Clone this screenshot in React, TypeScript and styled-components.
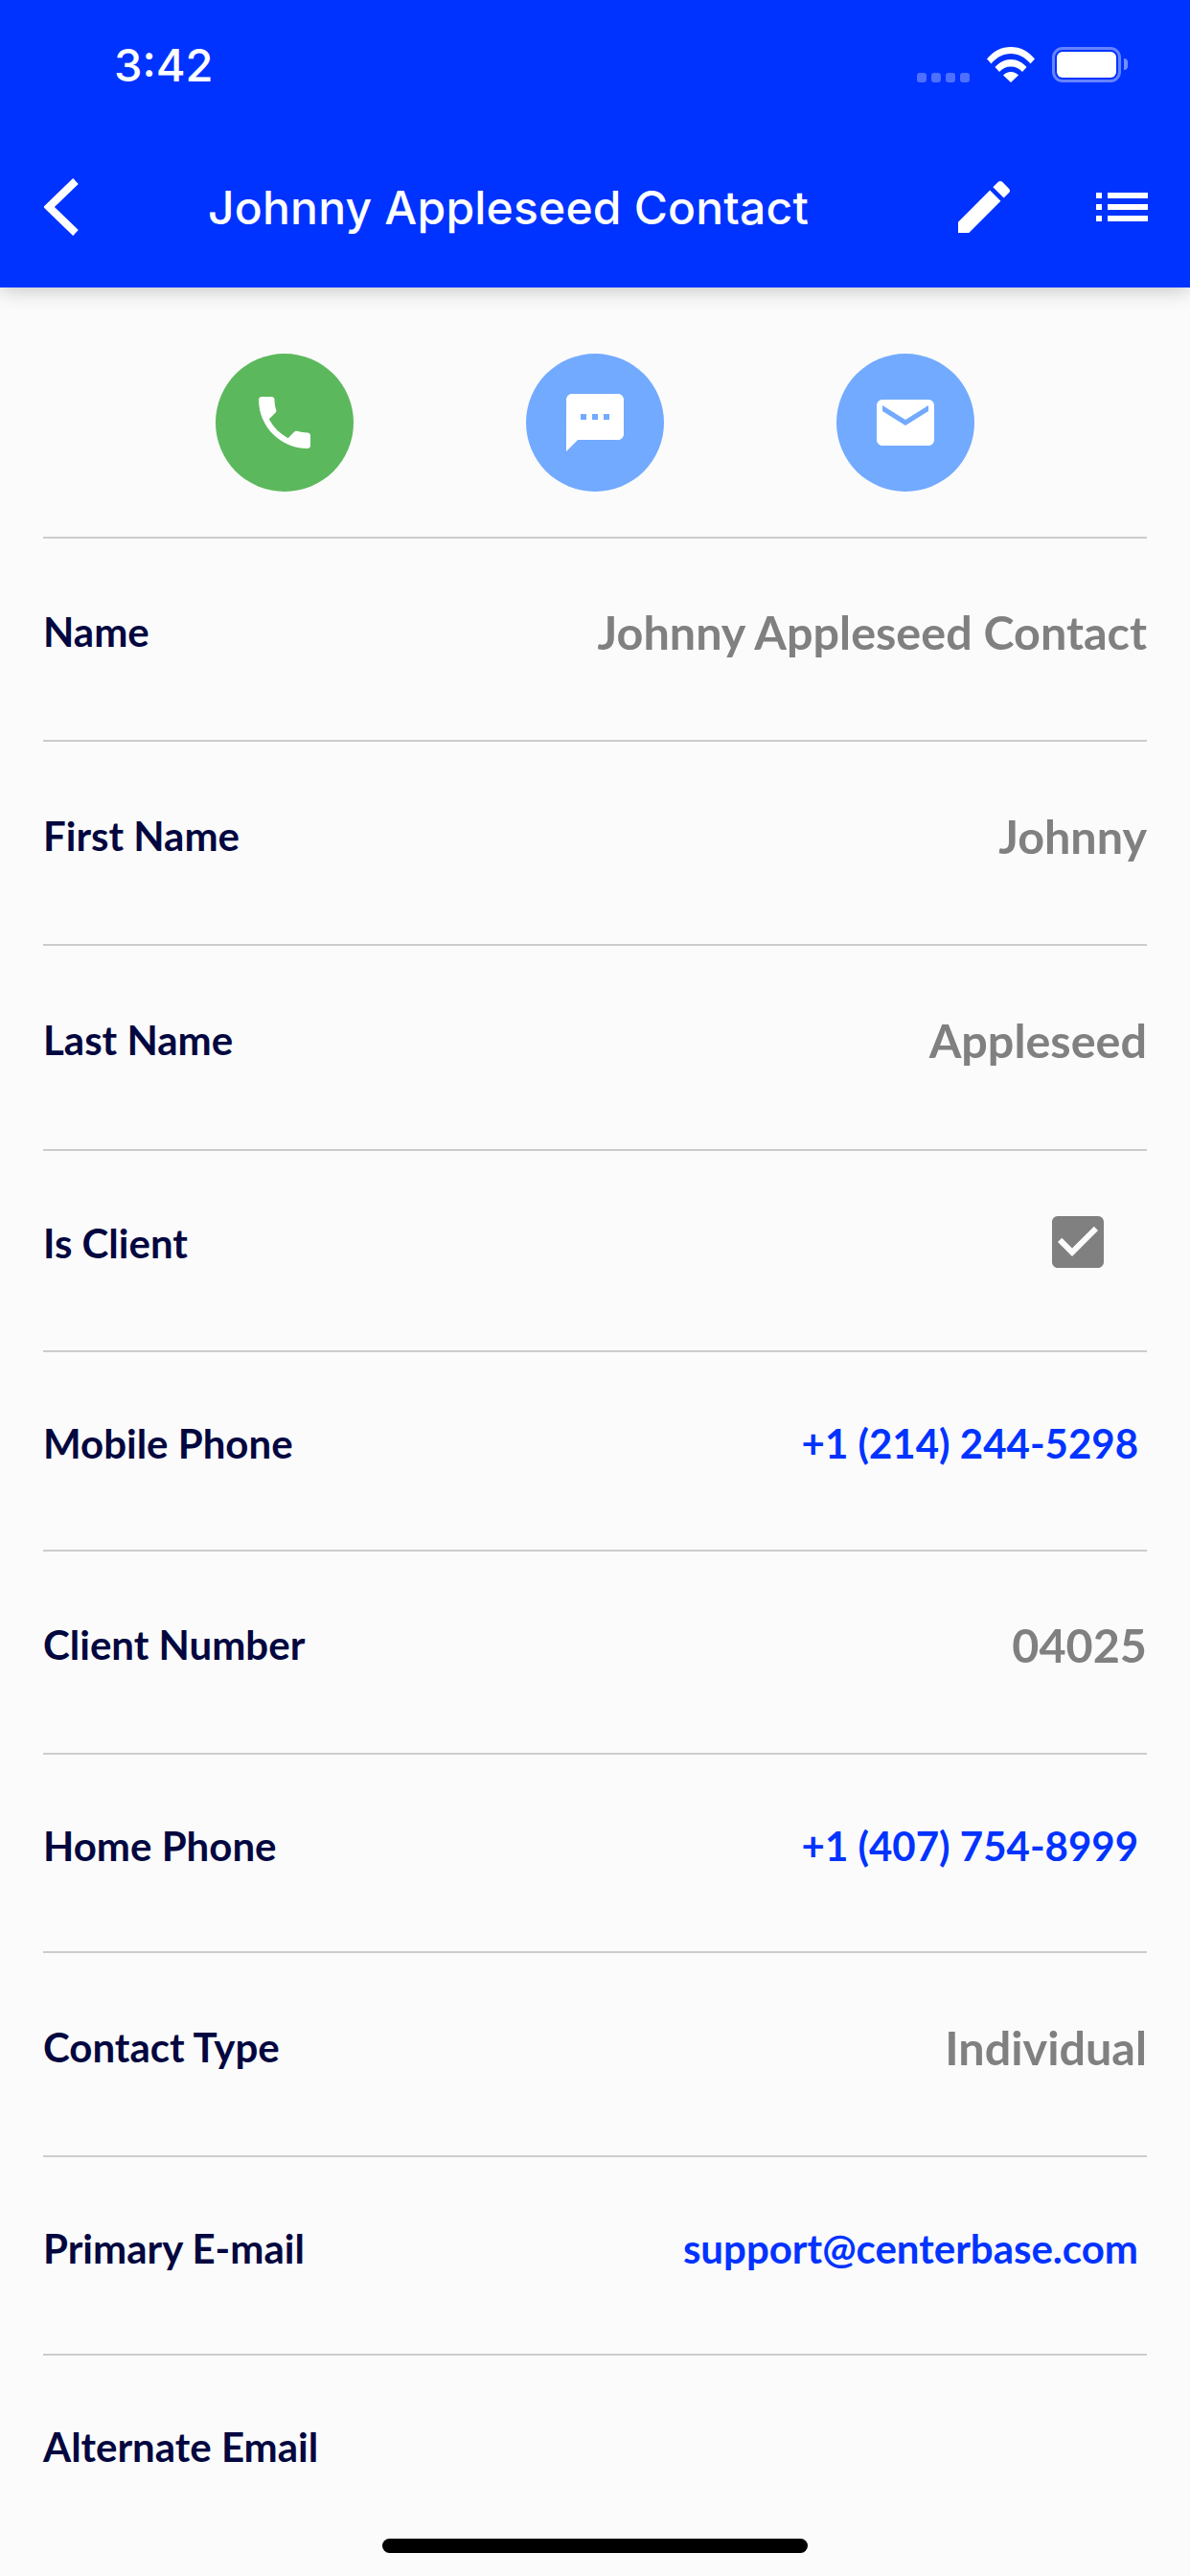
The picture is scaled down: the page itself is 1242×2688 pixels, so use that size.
import React from "react";
import styled, { createGlobalStyle } from "styled-components";

const GlobalStyle = createGlobalStyle`
  html, body {
    margin: 0;
    padding: 0;
    background: #fbfbfb;
  }
`;

interface RowData {
  label: string;
  value?: string;
  link?: boolean;
  checked?: boolean;
  height: number;
}

const rows: RowData[] = [
  { label: "Name", value: "Johnny Appleseed Contact", height: 212 },
  { label: "First Name", value: "Johnny", height: 213 },
  { label: "Last Name", value: "Appleseed", height: 214 },
  { label: "Is Client", checked: true, height: 210 },
  { label: "Mobile Phone", value: "+1 (214) 244-5298", link: true, height: 208 },
  { label: "Client Number", value: "04025", height: 212 },
  { label: "Home Phone", value: "+1 (407) 754-8999", link: true, height: 207 },
  { label: "Contact Type", value: "Individual", height: 213 },
  { label: "Primary E-mail", value: "support@centerbase.com", link: true, height: 207 },
  { label: "Alternate Email", height: 207 },
];

function App() {
  return (
    <Screen>
      <GlobalStyle />
      <Header>
        <StatusBar>
          <Clock>3:42</Clock>
          <StatusIcons>
            <SignalDots>
              <i />
              <i />
              <i />
              <i />
            </SignalDots>
            <svg width="50" height="37" viewBox="0 0 50 37">
              <path d="M0 12.500C6.500 4.500 15 0 25 0s18.500 4.500 25 12.500l-4.500 5C39.500 10.500 33 7 25 7S10.500 10.500 4.500 17.500z" fill="#fff" />
              <path d="M8.500 21C13 16 18.500 13 25 13s12 3 16.500 8l-4.500 5C34 22.500 30 20.500 25 20.500S16 22.500 13 26z" fill="#fff" />
              <path d="M17 29.500c2-2.200 5-3.500 8-3.500s6 1.300 8 3.500L25 37z" fill="#fff" />
            </svg>
            <Battery>
              <BatteryFill />
              <BatteryNub />
            </Battery>
          </StatusIcons>
        </StatusBar>
        <NavBar>
          <BackButton>
            <svg width="36" height="60" viewBox="0 0 36 60">
              <path d="M33 3L5 30l28 27" fill="none" stroke="#fff" strokeWidth="8" />
            </svg>
          </BackButton>
          <Title>Johnny Appleseed Contact</Title>
          <NavActions>
            <svg width="72" height="72" viewBox="0 0 24 24" fill="#fff">
              <path d="M3 17.250V21h3.750L17.810 9.940l-3.750-3.750L3 17.250zM20.710 7.040c.39-.39.39-1.020 0-1.410l-2.340-2.340c-.39-.39-1.020-.39-1.410 0l-1.830 1.830 3.750 3.750 1.830-1.830z" />
            </svg>
            <svg width="72" height="72" viewBox="0 0 24 24" fill="#fff">
              <path d="M3 13h2v-2H3v2zm0 4h2v-2H3v2zm0-8h2V7H3v2zm4 4h14v-2H7v2zm0 4h14v-2H7v2zM7 7v2h14V7H7z" />
            </svg>
          </NavActions>
        </NavBar>
      </Header>

      <ActionRow>
        <ActionCircle $color="#5cb85c">
          <svg width="72" height="72" viewBox="0 0 24 24" fill="#fff">
            <path d="M6.620 10.790c1.440 2.830 3.760 5.140 6.590 6.590l2.200-2.200c.27-.27.67-.36 1.020-.24 1.120.37 2.330.57 3.570.57.55 0 1 .45 1 1V20c0 .55-.45 1-1 1-9.390 0-17-7.610-17-17 0-.55.45-1 1-1h3.500c.55 0 1 .45 1 1 0 1.250.2 2.450.57 3.570.11.35.03.74-.25 1.020l-2.200 2.200z" />
          </svg>
        </ActionCircle>
        <ActionCircle $color="#72aaff">
          <svg width="72" height="72" viewBox="0 0 24 24" fill="#fff">
            <path d="M20 2H4c-1.100 0-1.990.9-1.990 2L2 22l4-4h14c1.100 0 2-.9 2-2V4c0-1.100-.9-2-2-2zM9 11H7V9h2v2zm4 0h-2V9h2v2zm4 0h-2V9h2v2z" />
          </svg>
        </ActionCircle>
        <ActionCircle $color="#72aaff">
          <svg width="72" height="72" viewBox="0 0 24 24" fill="#fff">
            <path d="M20 4H4c-1.100 0-1.990.9-1.990 2L2 18c0 1.100.9 2 2 2h16c1.100 0 2-.9 2-2V6c0-1.100-.9-2-2-2zm0 4l-8 5-8-5V6l8 5 8-5v2z" />
          </svg>
        </ActionCircle>
      </ActionRow>

      <List>
        {rows.map((row) => (
          <Row key={row.label} $height={row.height}>
            <Label>{row.label}</Label>
            {row.value && <Value $link={row.link}>{row.value}</Value>}
            {row.checked && (
              <CheckBox>
                <svg width="72" height="72" viewBox="0 0 24 24" fill="#808080">
                  <path d="M19 3H5c-1.110 0-2 .9-2 2v14c0 1.100.89 2 2 2h14c1.100 0 2-.9 2-2V5c0-1.100-.9-2-2-2zm-9 14l-5-5 1.410-1.410L10 14.170l7.590-7.590L19 8l-9 9z" />
                </svg>
              </CheckBox>
            )}
          </Row>
        ))}
      </List>

      <HomeIndicator />
    </Screen>
  );
}

const Screen = styled.div`
  position: relative;
  width: 1242px;
  height: 2688px;
  overflow: hidden;
  background: #fbfbfb;
  font-family: "Lato", "Liberation Sans", sans-serif;
`;

const Header = styled.header`
  position: relative;
  height: 300px;
  background: #0033ff;
  box-shadow: 0 3px 20px rgba(0, 0, 0, 0.22);
  color: #fff;
`;

const StatusBar = styled.div`
  display: flex;
  justify-content: space-between;
  align-items: flex-start;
  height: 180px;
  padding: 39px 65px 0 119px;
  box-sizing: border-box;
`;

const Clock = styled.span`
  font-family: "Inter", "Liberation Sans", sans-serif;
  font-size: 47px;
  font-weight: 500;
  line-height: 57px;
`;

const StatusIcons = styled.div`
  display: flex;
  align-items: flex-end;
  gap: 18px;
  padding-top: 10px;
`;

const SignalDots = styled.div`
  display: flex;
  gap: 5px;
  & i {
    width: 10px;
    height: 10px;
    border-radius: 3px;
    background: rgba(255, 255, 255, 0.3);
  }
`;

const Battery = styled.div`
  position: relative;
  width: 72px;
  height: 37px;
  padding: 5px;
  box-sizing: border-box;
  border: 3px solid rgba(255, 255, 255, 0.4);
  border-radius: 11px;
  margin-right: 7px;
`;

const BatteryFill = styled.div`
  width: 100%;
  height: 100%;
  margin: -3px;
  padding: 3px;
  box-sizing: content-box;
  background: #fff;
  border-radius: 6px;
`;

const BatteryNub = styled.div`
  position: absolute;
  top: 9px;
  right: -10px;
  width: 4px;
  height: 12px;
  background: rgba(255, 255, 255, 0.45);
  border-radius: 0 4px 4px 0;
`;

const NavBar = styled.nav`
  display: flex;
  align-items: center;
  height: 72px;
  padding: 0 35px 0 46px;
`;

const BackButton = styled.div`
  display: flex;
  width: 171px;
`;

const Title = styled.h1`
  flex: 1;
  margin: 0;
  font-family: "Inter", "Liberation Sans", sans-serif;
  font-size: 48px;
  font-weight: 500;
  letter-spacing: 0.2px;
  white-space: nowrap;
`;

const NavActions = styled.div`
  display: flex;
  gap: 72px;
`;

const ActionRow = styled.div`
  display: flex;
  justify-content: center;
  gap: 180px;
  padding-top: 69px;
  height: 191px;
  box-sizing: content-box;
`;

const ActionCircle = styled.div<{ $color: string }>`
  display: flex;
  align-items: center;
  justify-content: center;
  width: 144px;
  height: 144px;
  border-radius: 50%;
  background: ${(p) => p.$color};
`;

const List = styled.div`
  margin: 0 45px;
`;

const Row = styled.div<{ $height: number }>`
  display: flex;
  align-items: center;
  justify-content: space-between;
  box-sizing: border-box;
  height: ${(p) => p.$height}px;
  border-top: 2px solid #cccccc;
`;

const Label = styled.span`
  margin-top: -16px;
  font-size: 42px;
  font-weight: 700;
  color: #03073f;
`;

const Value = styled.span<{ $link?: boolean }>`
  margin-top: -16px;
  font-size: ${(p) => (p.$link ? "42px" : "48.500px")};
  font-weight: 700;
  color: ${(p) => (p.$link ? "#0033ff" : "#808080")};
  padding-right: ${(p) => (p.$link ? "9px" : "0")};
`;

const CheckBox = styled.div`
  display: flex;
  margin-top: -18px;
  margin-right: 36px;
`;

const HomeIndicator = styled.div`
  position: absolute;
  left: 399px;
  top: 2649px;
  width: 444px;
  height: 15px;
  border-radius: 8px;
  background: #000;
`;

export default App;
